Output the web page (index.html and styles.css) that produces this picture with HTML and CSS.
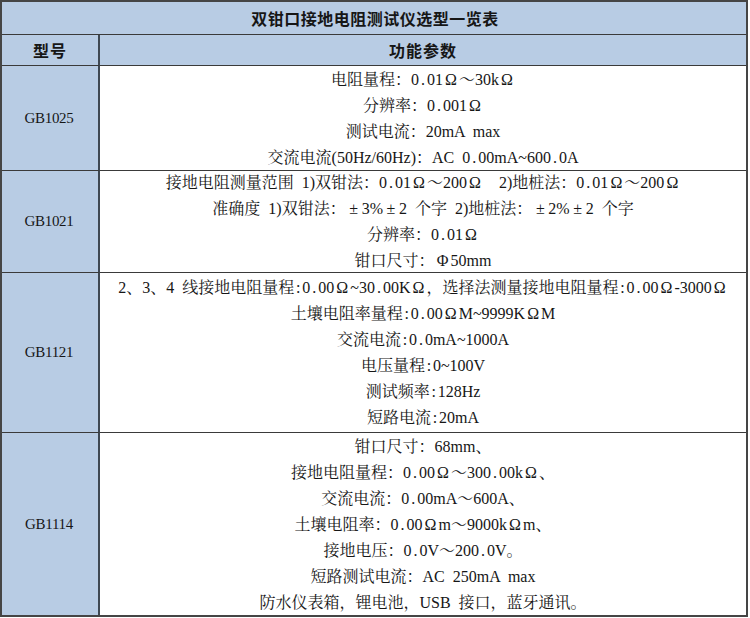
FILE: index.html
```html
<!DOCTYPE html>
<html lang="zh-CN">
<head>
<meta charset="utf-8">
<title>双钳口接地电阻测试仪选型一览表</title>
<link rel="stylesheet" href="styles.css">
</head>
<body>
<div class="sheet">
  <div class="cell title">双钳口接地电阻测试仪选型一览表</div>

  <div class="cell head model">型号</div>
  <div class="cell head">功能参数</div>

  <div class="cell model name">GB1025</div>
  <div class="cell spec">
    <div class="ln">电阻量程：0<span class="dot">.</span>01<span class="om">Ω</span>～30k<span class="om">Ω</span></div>
    <div class="ln">分辨率：0<span class="dot">.</span>001<span class="om">Ω</span></div>
    <div class="ln">测试电流：20mA max</div>
    <div class="ln">交流电流(50Hz/60Hz)：AC 0<span class="dot">.</span>00mA~600<span class="dot">.</span>0A</div>
  </div>

  <div class="cell model name">GB1021</div>
  <div class="cell spec">
    <div class="ln">接地电阻测量范围 1)双钳法：0<span class="dot">.</span>01<span class="om">Ω</span>～200<span class="om">Ω</span>&nbsp; 2)地桩法：0<span class="dot">.</span>01<span class="om">Ω</span>～200<span class="om">Ω</span></div>
    <div class="ln">准确度 1)双钳法：<span class="om">±</span>3%<span class="om">±</span>2 个字 2)地桩法：<span class="om">±</span>2%<span class="om">±</span>2 个字</div>
    <div class="ln">分辨率：0<span class="dot">.</span>01<span class="om">Ω</span></div>
    <div class="ln">钳口尺寸：<span class="om">Φ</span>50mm</div>
  </div>

  <div class="cell model name">GB1121</div>
  <div class="cell spec">
    <div class="ln">2、3、4 线接地电阻量程<span class="dot">:</span>0<span class="dot">.</span>00<span class="om">Ω</span>~30<span class="dot">.</span>00K<span class="om">Ω</span>，选择法测量接地电阻量程<span class="dot">:</span>0<span class="dot">.</span>00<span class="om">Ω</span>-3000<span class="om">Ω</span></div>
    <div class="ln">土壤电阻率量程<span class="dot">:</span>0<span class="dot">.</span>00<span class="om">Ω</span>M~9999K<span class="om">Ω</span>M</div>
    <div class="ln">交流电流<span class="dot">:</span>0<span class="dot">.</span>0mA~1000A</div>
    <div class="ln">电压量程<span class="dot">:</span>0~100V</div>
    <div class="ln">测试频率<span class="dot">:</span>128Hz</div>
    <div class="ln">短路电流<span class="dot">:</span>20mA</div>
  </div>

  <div class="cell model name last">GB1114</div>
  <div class="cell spec last">
    <div class="ln">钳口尺寸：68mm、</div>
    <div class="ln">接地电阻量程：0<span class="dot">.</span>00<span class="om">Ω</span>～300<span class="dot">.</span>00k<span class="om">Ω</span>、</div>
    <div class="ln">交流电流：0<span class="dot">.</span>00mA～600A、</div>
    <div class="ln">土壤电阻率：0<span class="dot">.</span>00<span class="om">Ω</span>m～9000k<span class="om">Ω</span>m、</div>
    <div class="ln">接地电压：0<span class="dot">.</span>0V～200<span class="dot">.</span>0V。</div>
    <div class="ln">短路测试电流：AC 250mA max</div>
    <div class="ln">防水仪表箱，锂电池，USB 接口，蓝牙通讯。</div>
  </div>
</div>
</body>
</html>
```

FILE: styles.css
```css
html, body {
  margin: 0;
  padding: 0;
  background: #ffffff;
}

.sheet {
  display: grid;
  grid-template-columns: 98px 1fr;
  grid-template-rows: 33px 31px 105px 102px 160px 182px;
  width: 748px;
  box-sizing: border-box;
  border: 2px solid #454545;
  font-family: "Liberation Serif", "Noto Serif CJK SC", "Noto Sans CJK SC", serif;
  font-size: 16px;
  color: #161616;
}

.cell {
  box-sizing: border-box;
  border-bottom: 1px solid #3a3a3a;
  display: flex;
  flex-direction: column;
  align-items: center;
  justify-content: center;
  white-space: nowrap;
}

.cell.last {
  border-bottom: none;
}

.title {
  grid-column: 1 / 3;
  background: #b8cce4;
  font-family: "Noto Sans CJK SC", sans-serif;
  font-weight: 700;
  font-size: 16px;
  letter-spacing: 0.5px;
  padding-left: 2px;
}

.head {
  background: #b8cce4;
  font-family: "Noto Sans CJK SC", sans-serif;
  font-weight: 700;
  font-size: 16px;
  letter-spacing: 1px;
}

.model {
  background: #b8cce4;
  border-right: 2px solid #3f4852;
}

.name {
  font-family: "Liberation Serif", serif;
  font-size: 15px;
  letter-spacing: -0.3px;
  padding-right: 2px;
}

.spec {
  background: #ffffff;
  padding-top: 1px;
}

.ln {
  line-height: 26px;
  height: 26px;
  word-spacing: 4px;
}

.om {
  display: inline-block;
  width: 16px;
  text-align: center;
}

.dot {
  display: inline-block;
  width: 8px;
  text-align: center;
}
```
